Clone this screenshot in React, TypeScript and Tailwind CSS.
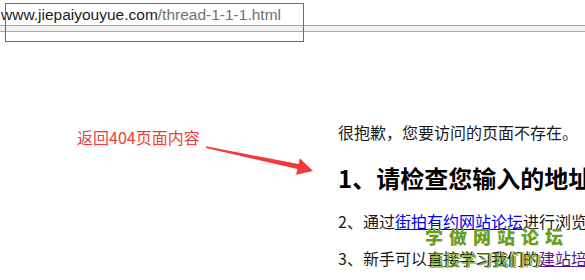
import React from "react";

const cjk = { fontFamily: '"Noto Sans CJK SC", "Noto Sans", sans-serif' };

export default function App() {
  return (
    <div className="relative w-[585px] h-[280px] overflow-hidden bg-white" style={cjk}>
      {/* address bar */}
      <div className="h-[25px] pl-[1px] pt-[6px] text-[15.5px] leading-[18px] whitespace-nowrap" style={{ fontFamily: '"Liberation Sans", Arial, sans-serif' }}>
        <span className="text-[#1b1b2a]">www.jiepaiyouyue.com</span>
        <span className="text-[#707070]">/thread-1-1-1.html</span>
      </div>
      <div className="h-[7px] border-y border-[#a9a9a9] bg-[#f0f0f0]" />

      {/* body */}
      <div className="flex">
        <div className="w-[338px] shrink-0 pl-[77px] pt-[94px]">
          <div className="text-[16px] leading-[22px] text-[#f03c3c] whitespace-nowrap">返回404页面内容</div>
        </div>
        <div className="flex-1 pt-[88px] whitespace-nowrap text-[#1a1a1a]">
          <p className="text-[16px] leading-[24px]">很抱歉，您要访问的页面不存在。</p>
          <h1 className="mt-[18px] text-[24px] leading-[32px] font-bold text-black">1、请检查您输入的地址是否正确</h1>
          <p className="mt-[15px] text-[16px] leading-[24px]">
            2、通过<a className="text-[#0000ee] underline">街拍有约网站论坛</a>进行浏览
          </p>
          <p className="mt-[13px] text-[16px] leading-[24px]">
            3、新手可以直接学习我们的<a className="text-[#551a8b] underline">建站培训</a>
          </p>
        </div>
      </div>

      {/* annotation rectangle + arrow */}
      <svg className="absolute left-0 top-0 pointer-events-none" width="585" height="280" viewBox="0 0 585 280">
        <rect x="5.5" y="3.5" width="298" height="38" fill="none" stroke="#ee3333" strokeWidth="1" />
        <polygon
          points="206,146.3 298.6,164.1 299.9,158.2 313,171 296.1,174.8 297.4,168.9 206,147.9"
          fill="#f23a3a"
        />
      </svg>

      {/* watermark */}
      <div className="absolute left-[425px] top-[225px] text-[18px] leading-[22px] font-black tracking-[6px] text-[#6c9e22] whitespace-nowrap">
        学做网站论坛
      </div>
      <div className="absolute left-[429px] top-[247px] text-[16px] leading-[24px] font-bold text-[#6c9e22] opacity-75 whitespace-nowrap">
        直接学习我们的
      </div>
    </div>
  );
}
